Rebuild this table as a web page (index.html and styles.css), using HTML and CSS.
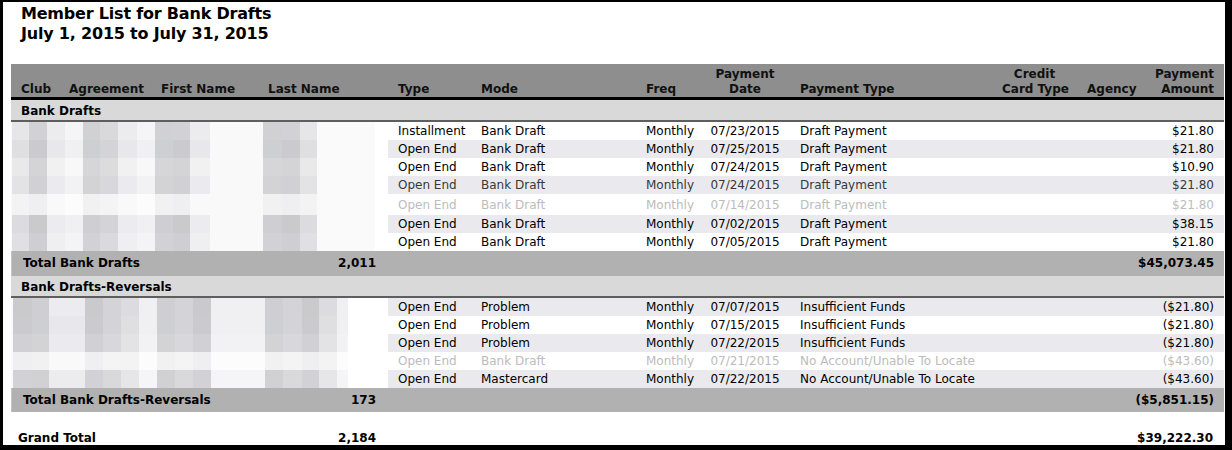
FILE: index.html
```html
<!DOCTYPE html>
<html lang="en">
<head>
<meta charset="utf-8">
<title>Member List for Bank Drafts</title>
<link rel="stylesheet" href="styles.css">
</head>
<body>
<div class="frame">
  <div class="title">
    <div>Member List for Bank Drafts</div>
    <div>July 1, 2015 to July 31, 2015</div>
  </div>
  <table class="report">
    <colgroup>
      <col class="w-club"><col class="w-agr"><col class="w-first"><col class="w-last">
      <col class="w-type"><col class="w-mode"><col class="w-freq"><col class="w-date">
      <col class="w-ptype"><col class="w-cc"><col class="w-agency"><col class="w-amt">
    </colgroup>
    <thead>
      <tr>
        <th>Club</th><th>Agreement</th><th>First Name</th><th>Last Name</th>
        <th>Type</th><th>Mode</th><th>Freq</th><th class="c">Payment<br>Date</th>
        <th>Payment Type</th><th class="c">Credit<br>Card Type</th><th>Agency</th><th class="r">Payment<br>Amount</th>
      </tr>
    </thead>
    <tbody>
      <tr class="section"><td colspan="12">Bank Drafts</td></tr>
      <tr class="row"><td colspan="4" class="mosaic m1"></td><td>Installment</td><td>Bank Draft</td><td>Monthly</td><td class="c">07/23/2015</td><td>Draft Payment</td><td></td><td></td><td class="r">$21.80</td></tr>
      <tr class="row alt"><td colspan="4" class="mosaic m2"></td><td>Open End</td><td>Bank Draft</td><td>Monthly</td><td class="c">07/25/2015</td><td>Draft Payment</td><td></td><td></td><td class="r">$21.80</td></tr>
      <tr class="row"><td colspan="4" class="mosaic m3"></td><td>Open End</td><td>Bank Draft</td><td>Monthly</td><td class="c">07/24/2015</td><td>Draft Payment</td><td></td><td></td><td class="r">$10.90</td></tr>
      <tr class="row alt dim"><td colspan="4" class="mosaic m4"></td><td>Open End</td><td>Bank Draft</td><td>Monthly</td><td class="c">07/24/2015</td><td>Draft Payment</td><td></td><td></td><td class="r">$21.80</td></tr>
      <tr class="row faded tall"><td colspan="4" class="mosaic m5"></td><td>Open End</td><td>Bank Draft</td><td>Monthly</td><td class="c">07/14/2015</td><td>Draft Payment</td><td></td><td></td><td class="r">$21.80</td></tr>
      <tr class="row alt"><td colspan="4" class="mosaic m6"></td><td>Open End</td><td>Bank Draft</td><td>Monthly</td><td class="c">07/02/2015</td><td>Draft Payment</td><td></td><td></td><td class="r">$38.15</td></tr>
      <tr class="row"><td colspan="4" class="mosaic m7"></td><td>Open End</td><td>Bank Draft</td><td>Monthly</td><td class="c">07/05/2015</td><td>Draft Payment</td><td></td><td></td><td class="r">$21.80</td></tr>
      <tr class="total"><td colspan="3">Total Bank Drafts</td><td class="r count">2,011</td><td colspan="6"></td><td colspan="2" class="r">$45,073.45</td></tr>

      <tr class="section"><td colspan="12">Bank Drafts-Reversals</td></tr>
      <tr class="row alt"><td colspan="4" class="mosaic b m6"></td><td>Open End</td><td>Problem</td><td>Monthly</td><td class="c">07/07/2015</td><td>Insufficient Funds</td><td></td><td></td><td class="r">($21.80)</td></tr>
      <tr class="row"><td colspan="4" class="mosaic b m2"></td><td>Open End</td><td>Problem</td><td>Monthly</td><td class="c">07/15/2015</td><td>Insufficient Funds</td><td></td><td></td><td class="r">($21.80)</td></tr>
      <tr class="row alt"><td colspan="4" class="mosaic b m4"></td><td>Open End</td><td>Problem</td><td>Monthly</td><td class="c">07/22/2015</td><td>Insufficient Funds</td><td></td><td></td><td class="r">($21.80)</td></tr>
      <tr class="row faded"><td colspan="4" class="mosaic b m5"></td><td>Open End</td><td>Bank Draft</td><td>Monthly</td><td class="c">07/21/2015</td><td>No Account/Unable To Locate</td><td></td><td></td><td class="r">($43.60)</td></tr>
      <tr class="row alt"><td colspan="4" class="mosaic b m1"></td><td>Open End</td><td>Mastercard</td><td>Monthly</td><td class="c">07/22/2015</td><td>No Account/Unable To Locate</td><td></td><td></td><td class="r">($43.60)</td></tr>
      <tr class="total short"><td colspan="3">Total Bank Drafts-Reversals</td><td class="r count">173</td><td colspan="6"></td><td colspan="2" class="r">($5,851.15)</td></tr>

      <tr class="spacer"><td colspan="12"></td></tr>
      <tr class="grand"><td colspan="3">Grand Total</td><td class="r count">2,184</td><td colspan="6"></td><td colspan="2" class="r">$39,222.30</td></tr>
    </tbody>
  </table>
</div>
</body>
</html>
```

FILE: styles.css
```css
html, body {
  margin: 0;
  padding: 0;
  background: #fff;
}

.frame {
  width: 1232px;
  height: 450px;
  box-sizing: border-box;
  border-style: solid;
  border-color: #000;
  border-width: 2px 7px 5px 3px;
  overflow: hidden;
  background: #fff;
  font-family: "DejaVu Sans", Verdana, sans-serif;
  color: #000;
}

.title {
  padding: 2px 0 0 18px;
  font-weight: bold;
  font-size: 16px;
  line-height: 20px;
  letter-spacing: -0.2px;
}

.report {
  margin: 20px 0 0 8px;
  width: 1213px;
  table-layout: fixed;
  border-collapse: separate;
  border-spacing: 0;
  font-size: 12px;
}

.w-club { width: 48px; }
.w-agr { width: 92px; }
.w-first { width: 107px; }
.w-last { width: 130px; }
.w-type { width: 83px; }
.w-mode { width: 165px; }
.w-freq { width: 64px; }
.w-date { width: 90px; }
.w-ptype { width: 202px; }
.w-cc { width: 85px; }
.w-agency { width: 68px; }
.w-amt { width: 79px; }

.report th {
  background: #8e8e8e;
  color: #111;
  font-weight: bold;
  text-align: left;
  vertical-align: bottom;
  padding: 3px 10px 0 10px;
  line-height: 15px;
  border-bottom: 3px solid #000;
  white-space: nowrap;
}

.report td {
  padding: 0 10px;
  white-space: nowrap;
}

.report .c { text-align: center; }
.report .r { text-align: right; }

.section td {
  background: #d9d9d9;
  font-weight: bold;
  padding-top: 3px;
  line-height: 17px;
  border-bottom: 2px solid #5e5e5e;
}

.row td {
  padding-top: 1px;
  line-height: 17px;
  background: #fff;
}

.row.alt td { background: #eaeaee; }
.row.dim td { color: #383838; }
.row.faded td { color: #bcbcbc; }
.row.tall td {
  padding-top: 2px;
  line-height: 19px;
}

.total td {
  background: #b1b1b1;
  font-weight: bold;
  line-height: 25px;
}
.total.short td { line-height: 24px; }
.total td:first-child {
  padding-left: 11px;
  border-left: 1px solid #c4c4c4;
}

.report td.count { padding-right: 12px; }

.spacer td {
  height: 15px;
  padding: 0;
  line-height: 0;
}

.grand td {
  font-weight: bold;
  padding-top: 1px;
  line-height: 20px;
}
.grand td:first-child { padding-left: 7px; }
.grand td:last-child { padding-right: 11px; }

/* redaction mosaic over the name columns */
.row td.mosaic {
  padding: 0;
  background-color: #fff;
  background-image: linear-gradient(to right,
    #fafafa 0 1px,
    var(--a) 1px 18px, var(--b) 18px 36px, var(--c) 36px 54px, var(--d) 54px 72px,
    var(--e) 72px 89px, var(--f) 89px 107px, var(--c) 107px 126px, var(--d) 126px 144px,
    var(--e) 144px 162px, var(--b) 162px 179px, var(--c) 179px 199px, #f9f9fa 199px 252px,
    var(--e) 252px 271px, var(--b) 271px 289px, var(--a) 289px 306px, #fafafa 306px 364px,
    #fff 364px);
}
.row td.mosaic.b {
  background-image: linear-gradient(to right,
    #fafafa 0 2px,
    var(--b) 2px 21px, var(--e) 21px 38px, var(--c) 38px 74px, var(--b) 74px 92px,
    var(--f) 92px 110px, var(--a) 110px 128px, var(--d) 128px 146px, var(--e) 146px 164px,
    var(--f) 164px 182px, var(--b) 182px 200px, var(--d) 200px 254px, var(--e) 254px 272px,
    var(--f) 272px 291px, var(--b) 291px 308px, var(--a) 308px 326px, var(--d) 326px 337px,
    #fff 337px);
}
.m1 { --a: #e6e6e8; --b: #d2d2d6; --c: #ececef; --d: #f5f5f7; --e: #d1d1d4; --f: #d9d9dc; }
.m2 { --a: #dfdfe2; --b: #cbcbcf; --c: #e8e8ec; --d: #f0f0f2; --e: #cecfd2; --f: #d4d4d8; }
.m3 { --a: #e9e9ea; --b: #d4d4d6; --c: #f1f1f2; --d: #f8f8f8; --e: #d6d6d8; --f: #dcdcdd; }
.m4 { --a: #e3e3e6; --b: #d1d1d5; --c: #ebebef; --d: #f2f2f4; --e: #d3d3d6; --f: #d8d8dc; }
.m5 { --a: #f3f3f4; --b: #efeff1; --c: #f9f9fa; --d: #fcfcfc; --e: #f1f1f2; --f: #f4f4f5; }
.m6 { --a: #dcdce0; --b: #cacacd; --c: #ececf0; --d: #f0f0f3; --e: #cfcfd3; --f: #d4d4d8; }
.m7 { --a: #e0e0e4; --b: #cfcfd3; --c: #efeff1; --d: #f4f4f6; --e: #d2d2d6; --f: #dadade; }
```
